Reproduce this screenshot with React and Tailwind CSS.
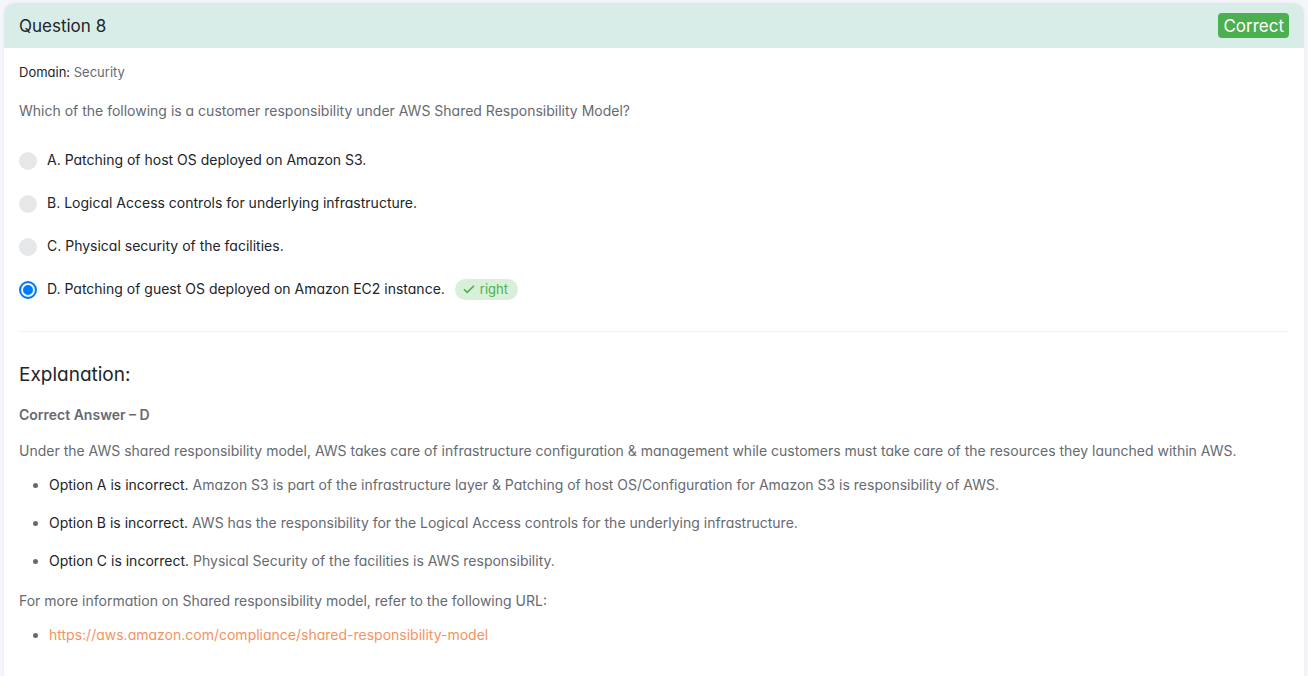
import { useState } from "react";

const options = [
  { id: "A", text: "A. Patching of host OS deployed on Amazon S3." },
  { id: "B", text: "B. Logical Access controls for underlying infrastructure." },
  { id: "C", text: "C. Physical security of the facilities." },
  { id: "D", text: "D. Patching of guest OS deployed on Amazon EC2 instance.", right: true },
];

const reasons = [
  {
    label: "Option A is incorrect.",
    text: "Amazon S3 is part of the infrastructure layer & Patching of host OS/Configuration for Amazon S3 is responsibility of AWS.",
  },
  {
    label: "Option B is incorrect.",
    text: "AWS has the responsibility for the Logical Access controls for the underlying infrastructure.",
  },
  {
    label: "Option C is incorrect.",
    text: "Physical Security of the facilities is AWS responsibility.",
  },
];

function Option({ option, checked, onSelect }) {
  const id = `option-${option.id}`;
  return (
    <div className="flex items-center">
      <input
        type="radio"
        id={id}
        name="answer"
        checked={checked}
        onChange={() => onSelect(option.id)}
        className="mt-0.5 size-[18px] shrink-0 appearance-none rounded-full bg-[#e6e7e9] checked:border-2 checked:border-[#007bff] checked:bg-[#007bff] checked:bg-clip-padding checked:shadow-[inset_0_0_0_2px_#fff]"
      />
      <label htmlFor={id} className="ml-2.5 text-[#212529]">
        {option.text}
      </label>
      {option.right && (
        <span className="ml-2.5 inline-flex h-[21px] items-center gap-[5px] rounded-full bg-[#d8efd9] px-2 pr-2.5 text-[13px] text-[#4caf50]">
          <svg viewBox="0 0 12 12" className="size-3" fill="none" stroke="currentColor" strokeWidth="1.6" aria-hidden="true">
            <path d="M1 6.2 4.2 9.3 11 2.7" />
          </svg>
          right
        </span>
      )}
    </div>
  );
}

export default function App() {
  const [selected, setSelected] = useState("D");

  return (
    <div className="flex min-h-screen flex-col bg-[#f5f6fb] px-1 pt-[3px] font-['Inter',sans-serif] text-[14px] leading-6 text-[#666a70] [font-feature-settings:'cv11']">
      <main className="grow rounded-t-[10px] bg-white shadow-[0_0_4px_rgba(0,0,0,0.05)]">
        <header className="flex h-[45px] items-center justify-between rounded-t-[10px] bg-[#d9ede8] px-[15px]">
          <h1 className="text-[17px] text-[#212529]">Question 8</h1>
          <span className="flex h-[25px] items-center rounded-[4px] bg-[#4caf50] px-[5px] text-[17px] text-white">
            Correct
          </span>
        </header>

        <div className="px-[15px] pt-3 pb-7">
          <p className="text-[13px]">
            <span className="text-[#212529]">Domain:</span> Security
          </p>
          <p className="mt-[15px]">
            Which of the following is a customer responsibility under AWS Shared Responsibility Model?
          </p>

          <fieldset className="mt-[25px] flex flex-col gap-[19px]">
            {options.map((option) => (
              <Option
                key={option.id}
                option={option}
                checked={selected === option.id}
                onSelect={setSelected}
              />
            ))}
          </fieldset>

          <hr className="mt-[30px] border-[#f0f0f2]" />

          <h2 className="mt-[31px] text-[19px] leading-6 text-[#212529]">Explanation:</h2>
          <p className="mt-4 font-semibold">Correct Answer – D</p>
          <p className="mt-3">
            Under the AWS shared responsibility model, AWS takes care of infrastructure configuration &amp; management while customers must take care of the resources they launched within AWS.
          </p>
          <ul className="mt-2.5 flex list-disc flex-col gap-3.5 pl-[30px]">
            {reasons.map((reason) => (
              <li key={reason.label}>
                <span className="text-[#212529]">{reason.label}</span> {reason.text}
              </li>
            ))}
          </ul>
          <p className="mt-4">
            For more information on Shared responsibility model, refer to the following URL:
          </p>
          <ul className="mt-2.5 list-disc pl-[30px]">
            <li>
              <a
                href="https://aws.amazon.com/compliance/shared-responsibility-model"
                className="text-[#f3935f]"
              >
                https://aws.amazon.com/compliance/shared-responsibility-model
              </a>
            </li>
          </ul>
        </div>
      </main>
    </div>
  );
}
